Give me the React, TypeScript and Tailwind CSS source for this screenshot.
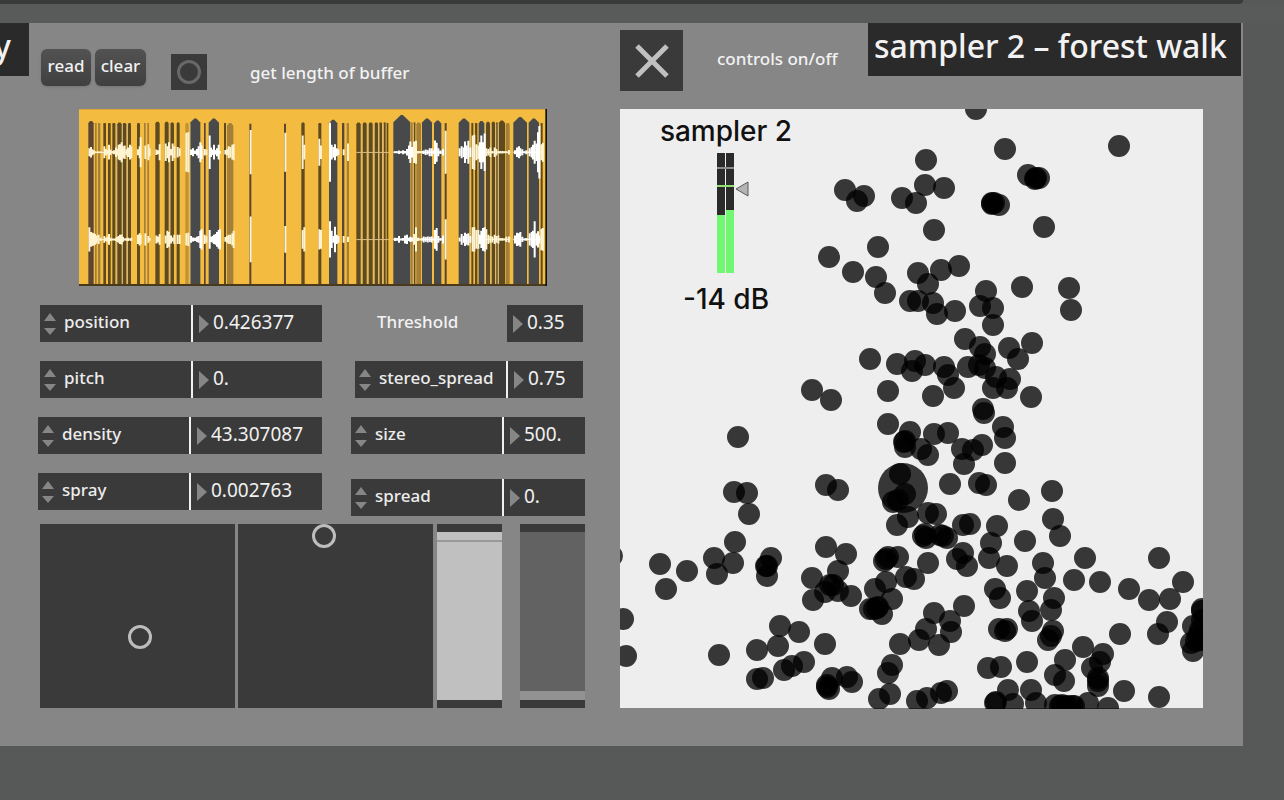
import { useState } from "react";

const DOTS: [number, number][] = [
  [976, 109], [1005, 149], [1119, 146], [926, 160], [925, 185], [944, 188], [1028, 175], [1035, 179], [1039, 178], [1036, 178],
  [845, 190], [864, 196], [857, 201], [902, 198], [916, 203], [992, 204], [999, 205], [994, 203], [992, 203], [1044, 227],
  [934, 230], [878, 247], [829, 257], [853, 272], [876, 277], [885, 293], [918, 273], [941, 270], [959, 266], [928, 284],
  [910, 301], [918, 301], [933, 303], [937, 314], [955, 311], [986, 291], [980, 306], [993, 308], [993, 325], [1022, 287],
  [1069, 288], [1071, 310], [965, 339], [980, 347], [985, 354], [1009, 348], [1032, 343], [1018, 359], [870, 359], [897, 364],
  [915, 361], [912, 371], [925, 365], [944, 367], [948, 375], [954, 388], [968, 367], [979, 365], [985, 368], [996, 377],
  [1010, 379], [993, 388], [1007, 388], [812, 390], [831, 400], [888, 391], [933, 396], [1031, 397],
  [983, 409], [984, 413], [1003, 427], [1005, 438], [888, 424], [910, 432], [905, 441], [905, 447], [904, 442], [934, 434],
  [948, 433], [921, 449], [928, 455], [962, 449], [982, 445], [973, 450], [964, 464], [1005, 463], [826, 485], [838, 490],
  [900, 474], [905, 494], [893, 502], [898, 500], [908, 517], [897, 525], [950, 484], [979, 483], [986, 485], [928, 513],
  [936, 514], [1019, 500], [1052, 491], [1053, 519], [1060, 536], [963, 525], [970, 524], [997, 526], [923, 536], [925, 534],
  [926, 538], [943, 536], [947, 538], [940, 535], [991, 543], [989, 558], [1007, 566], [1025, 541], [963, 553], [957, 559],
  [967, 566], [928, 563], [826, 547], [846, 554], [838, 571], [812, 578], [813, 600], [825, 592], [830, 585], [833, 585],
  [838, 591], [851, 596], [884, 561], [888, 557], [886, 559], [898, 557], [886, 582], [906, 577], [914, 579], [875, 589], [892, 599],
  [870, 609], [877, 608], [882, 614], [878, 607], [874, 609], [995, 589], [1000, 598], [1027, 591], [1043, 563], [1045, 578],
  [1085, 558], [1074, 580], [1100, 582], [1054, 598], [1051, 610], [1029, 611], [1032, 621], [964, 606], [934, 613], [950, 621],
  [951, 632], [926, 629], [919, 640], [939, 645], [900, 644], [999, 629], [1007, 629], [1005, 631], [1053, 631], [1048, 640],
  [1051, 636], [1159, 558], [1183, 582], [1129, 589], [1149, 600], [1170, 599], [1167, 622], [1158, 634], [1120, 634],
  [1202, 609], [1202, 611], [1193, 626], [1191, 643], [1193, 651], [1202, 640], [1202, 620], [1200, 630], [1198, 636], [1196, 641],
  [1083, 647], [1103, 654], [1092, 668], [1100, 662], [1098, 678], [1098, 686], [1098, 681], [1124, 691], [1159, 697],
  [1065, 660], [1055, 675], [1064, 681], [1027, 662], [988, 668], [1001, 667], [1008, 690], [1031, 690], [995, 703], [996, 702],
  [1013, 704], [1036, 703], [1055, 705], [1062, 705], [1072, 706], [1067, 706], [1060, 706], [1074, 706], [1088, 703], [1108, 708],
  [917, 701], [927, 698], [941, 693], [947, 691], [735, 542], [660, 564], [687, 571], [666, 589], [714, 558], [717, 574],
  [733, 563], [771, 558], [767, 566], [767, 576], [766, 566], [623, 619], [626, 656], [612, 556], [719, 655], [780, 626], [799, 632],
  [778, 646], [757, 650], [825, 644], [804, 662], [784, 670], [792, 666], [757, 679], [763, 678], [832, 678],
  [827, 685], [829, 689], [827, 687], [847, 677], [852, 682], [892, 665], [888, 673], [890, 694], [879, 699],
  [738, 437], [734, 492], [747, 493], [749, 514],
];

const GREY = "#48494b";
const OLIVE = "#5e4a1e";
const BROWN = "#5c4633";
const TAN = "#a37f38";

/* [left, right, top, fill] of each slice, with the tip of a slice rising above its shoulders */
const SLICES: [number, number, number, string][] = [
  [28, 44, 36, BROWN], [48, 53, 42, TAN], [57, 64, 42, TAN], [73, 81, 42, OLIVE], [87, 95, 42, OLIVE], [100, 109, 42, OLIVE],
  [115, 128, 40, OLIVE], [131, 142, 42, OLIVE], [147, 156, 42, OLIVE], [174, 183, 42, OLIVE], [195, 200, 42, TAN], [205, 210, 42, TAN],
  [229, 242, 38, OLIVE], [257, 269, 38, OLIVE], [274, 285, 40, OLIVE], [293, 302, 40, OLIVE], [319, 329, 42, "#c4922f"],
  [334, 364, 28, GREY], [375, 380, 42, BROWN], [389, 420, 28, GREY], [435, 441, 42, OLIVE], [444, 463, 42, TAN],
  [511, 517, 44, BROWN], [615, 621, 44, BROWN], [667, 677, 40, OLIVE], [718, 727, 42, OLIVE], [750, 775, 32, GREY],
  [789, 796, 42, BROWN], [803, 810, 42, TAN], [832, 845, 40, OLIVE], [851, 863, 40, OLIVE], [869, 881, 40, OLIVE],
  [887, 897, 40, OLIVE], [901, 909, 40, OLIVE], [914, 920, 40, OLIVE], [923, 928, 42, OLIVE], [943, 994, 18, GREY],
  [996, 1001, 40, TAN], [1004, 1009, 40, OLIVE], [1012, 1026, 40, TAN], [1029, 1059, 28, GREY], [1065, 1087, 34, GREY],
  [1097, 1103, 42, BROWN], [1139, 1171, 28, GREY], [1177, 1183, 42, OLIVE], [1188, 1195, 42, OLIVE], [1199, 1216, 36, GREY],
  [1221, 1233, 38, OLIVE], [1238, 1248, 38, OLIVE], [1251, 1256, 40, OLIVE], [1259, 1278, 34, OLIVE], [1280, 1292, 42, TAN],
  [1303, 1344, 24, GREY], [1349, 1380, 28, GREY], [1385, 1391, 42, OLIVE],
];

/* pale seams between close slices */
const SEAMS = [111, 129, 144, 271, 331, 847, 865, 883, 898, 911, 1002, 1218, 1234, 1249, 1257];

/* [x, reach in the upper channel, reach in the lower channel] */
const PEAKS: [number, number, number][] = [
  [28, 12, 36], [33, 16, 22], [37, 9, 20], [41, 6, 18], [45, 3, 16], [50, 2, 12], [56, 3, 14], [62, 2, 5], [73, 18, 10], [78, 10, 5],
  [83, 7, 8], [87, 22, 16], [91, 8, 5], [96, 4, 3], [102, 6, 3], [108, 14, 5], [112, 10, 8], [116, 22, 10], [120, 24, 14], [125, 30, 15],
  [129, 18, 7], [134, 20, 3], [139, 9, 4], [144, 14, 5], [150, 22, 3], [154, 17, 5], [174, 9, 14], [179, 18, 18], [182, 45, 14],
  [196, 20, 18], [205, 24, 10], [209, 12, 4], [229, 8, 12], [234, 6, 9], [239, 24, 16], [257, 26, 12], [262, 18, 26], [267, 30, 22],
  [273, 10, 12], [278, 26, 6], [283, 18, 14], [293, 16, 14], [299, 12, 14], [319, 58, 18], [325, 60, 20], [333, 8, 10], [339, 12, 6],
  [345, 5, 5], [351, 10, 8], [356, 18, 10], [361, 30, 26], [365, 20, 30], [374, 10, 14], [379, 8, 10], [389, 50, 28], [393, 14, 8],
  [398, 8, 10], [402, 22, 14], [407, 7, 16], [411, 12, 22], [416, 22, 28], [420, 4, 30], [436, 7, 7], [441, 9, 10], [446, 18, 14],
  [451, 16, 14], [457, 22, 18], [461, 24, 26], [512, 66, 68], [616, 58, 40], [668, 50, 28], [673, 22, 36],
  [718, 40, 30], [723, 20, 28], [750, 88, 54], [755, 22, 26], [760, 16, 10], [765, 24, 38], [770, 12, 14], [775, 8, 10], [791, 9, 10],
  [804, 26, 8], [945, 3, 5], [951, 3, 4], [957, 5, 10], [963, 3, 3], [969, 6, 4], [975, 4, 12], [981, 10, 14],
  [987, 20, 5], [991, 32, 8], [996, 16, 6], [1002, 32, 16], [1008, 34, 36], [1014, 4, 5], [1020, 3, 3], [1026, 4, 4], [1031, 5, 9],
  [1037, 8, 7], [1043, 7, 9], [1049, 12, 8], [1055, 12, 9], [1061, 5, 3], [1065, 35, 28], [1070, 28, 34], [1075, 12, 10], [1081, 5, 4],
  [1089, 10, 12], [1097, 64, 60], [1139, 12, 6], [1145, 18, 16], [1151, 14, 10], [1155, 32, 20], [1160, 20, 16], [1165, 34, 18],
  [1171, 14, 10], [1178, 50, 36], [1183, 52, 36], [1189, 24, 28], [1195, 20, 28], [1200, 30, 14], [1204, 50, 26], [1209, 30, 34],
  [1214, 56, 36], [1219, 12, 30], [1225, 10, 14], [1231, 14, 10], [1237, 4, 9], [1244, 14, 14], [1249, 10, 10], [1255, 4, 12],
  [1261, 4, 4], [1267, 4, 4], [1273, 3, 3], [1279, 3, 8], [1287, 7, 9], [1305, 6, 12], [1311, 14, 20], [1317, 18, 18], [1321, 12, 22],
  [1327, 9, 8], [1333, 3, 3], [1339, 6, 4], [1349, 12, 18], [1355, 16, 22], [1359, 22, 26], [1364, 34, 54], [1369, 26, 18],
  [1374, 60, 24], [1378, 78, 12], [1384, 24, 32], [1389, 28, 34],
];

/* peaks over the grey slices are pure white, those over the narrow slices are warm */
function peakTint(x: number) {
  return SLICES.some(([l, r, , fill]) => fill === GREY && x >= l - 2 && x <= r + 2) ? "#ffffff" : "#fff4cf";
}

function Waveform() {
  return (
    <svg viewBox="0 0 1404 528" preserveAspectRatio="none" role="img" aria-label="Buffer waveform" className="block h-[177px] w-full">
      <rect width="1404" height="528" fill="#f3bb3f" />
      <rect width="1404" height="3" fill="#d9a63a" />
      {SLICES.map(([l, r, t, fill]) => (
        <path key={l} fill={fill} d={`M${l} 524V${t + (r - l) / 2.4}L${(l + r) / 2 - 3} ${t}h6L${r} ${t + (r - l) / 2.4}V524Z`} />
      ))}
      {SEAMS.map((x) => (
        <rect key={x} x={x} y="44" width="3" height="480" fill="#cdb98c" opacity="0.8" />
      ))}
      <rect x="56" y="128" width="100" height="3" fill="#fff3d0" />
      <rect x="56" y="388" width="100" height="3" fill="#fff3d0" />
      <rect x="832" y="128" width="100" height="3" fill="#d8bd86" />
      <rect x="832" y="388" width="100" height="3" fill="#d8bd86" />
      <rect x="943" y="127" width="150" height="4" fill="#fff" />
      <rect x="943" y="387" width="150" height="4" fill="#fff" />
      <rect x="1199" y="127" width="95" height="4" fill="#fff3d0" />
      <rect x="1199" y="387" width="95" height="4" fill="#fff3d0" />
      <rect x="1303" y="127" width="90" height="4" fill="#fff" />
      <rect x="1303" y="387" width="90" height="4" fill="#fff" />
      {PEAKS.map(([x, a, b]) => (
        <path key={x} fill={peakTint(x)} d={`M${x} ${129 - a}h6v${a * 2}h-6ZM${x} ${389 - b}h6v${b * 2}h-6Z`} />
      ))}
      <rect y="522" width="1404" height="6" fill="#4a3a1c" />
      <rect x="1399" width="5" height="528" fill="#111" />
    </svg>
  );
}

function ValueBox({ id, value }: { id: string; value: string }) {
  const [text, setText] = useState(value);
  return (
    <span className="flex h-[37px] min-w-0 flex-1 items-center bg-[#3a3a3a] pl-1.5">
      <svg viewBox="0 0 10 18" className="h-[18px] w-[10px] shrink-0" aria-hidden="true">
        <path d="M0 0L10 9L0 18Z" fill="#868686" />
      </svg>
      <input
        id={id}
        value={text}
        onChange={(e) => setText(e.target.value)}
        className="ml-1 h-9 w-full min-w-0 bg-transparent pb-1 text-[19px] font-normal text-[#f0f0f0] outline-none"
      />
    </span>
  );
}

function Param({ name, value, className }: { name: string; value: string; className: string }) {
  return (
    <div className={`flex ${className}`}>
      <label htmlFor={name} className="flex h-[37px] w-[151px] shrink-0 items-center bg-[#3a3a3a] pl-1">
        <svg viewBox="0 0 12 22" className="h-[22px] w-3 shrink-0" aria-hidden="true">
          <path d="M0 8L6 0L12 8ZM0 15H12L6 22Z" fill="#868686" />
        </svg>
        <span className="pb-1 pl-2 text-[17px] leading-6 font-medium text-[#ececec]">{name}</span>
      </label>
      <span className="w-0.5 shrink-0 bg-[#f0f0f0]" />
      <ValueBox id={name} value={value} />
    </div>
  );
}

function Meter() {
  return (
    <svg viewBox="0 0 32 120" className="h-[120px] w-8" role="img" aria-label="Output level">
      <rect width="8" height="120" fill="#2a2b2a" />
      <rect x="9" width="8" height="120" fill="#2a2b2a" />
      <rect y="14" width="17" height="2" fill="#8b8b8b" />
      <rect y="32" width="17" height="2" fill="#8fe070" />
      <rect y="62" width="8" height="58" fill="#72f772" />
      <rect x="9" y="57" width="8" height="63" fill="#72f772" />
      <path d="M19 36L31 29V43Z" fill="#b4b4b4" stroke="#5a5a5a" />
    </svg>
  );
}

function Canvas() {
  return (
    <div className="relative">
      <svg viewBox="620 109 583 600" className="block w-full" role="img" aria-label="Grain map">
        <rect x="620" y="109" width="583" height="599" fill="#eeeeee" />
        <circle cx="903" cy="488" r="25" opacity="0.77" />
        {DOTS.map(([x, y], i) => (
          <circle key={i} cx={x} cy={y} r="11" opacity="0.77" />
        ))}
      </svg>
      <div className="absolute top-1 left-7 flex w-[156px] flex-col items-center font-['Inter',sans-serif] text-[28px] leading-9 font-medium text-[#111]">
        <span className="whitespace-nowrap">sampler 2</span>
        <div className="mt-1 pl-3.5">
          <Meter />
        </div>
        <span className="mt-2 whitespace-nowrap">-14 dB</span>
      </div>
    </div>
  );
}

function Pad({ label, dot }: { label: string; dot: string }) {
  return (
    <div role="group" aria-label={label} className="relative h-[184px] flex-1 bg-[#3a3a3a]">
      <span className={`absolute size-6 rounded-full border-[3px] border-[#bdbdbd] ${dot}`} />
    </div>
  );
}

export default function App() {
  const [on, setOn] = useState(true);
  return (
    <div className="min-h-screen overflow-x-hidden bg-[#575958] font-['Noto_Sans',sans-serif] font-medium text-[#f2f2f2]">
      <div className="mr-[41px] h-1 rounded-br bg-[#3a3a3a]" />
      <div className="h-[19px] bg-[#595b5a]" />
      <main className="mr-[41px] flex bg-[#868686] pb-[37px]">
        <section className="w-[585px] shrink-0">
          <div className="flex h-[86px] items-start">
            <div className="flex h-[53px] w-[29px] shrink-0 justify-end overflow-hidden bg-[#2a2a2a] pr-[18px] text-[32px] leading-[46px]">y</div>
            <button className="mt-[26px] ml-3 h-[37px] w-[50px] rounded-md bg-linear-to-b from-[#525252] to-[#404040] pb-1 text-[17px] shadow-sm">read</button>
            <button className="mt-[26px] ml-1 h-[37px] w-[51px] rounded-md bg-linear-to-b from-[#525252] to-[#404040] pb-1 text-[17px] shadow-sm">clear</button>
            <button aria-label="get length" className="mt-[31px] ml-[25px] flex size-9 items-center justify-center bg-[#3a3a3a]">
              <span className="size-6 rounded-full border-[3px] border-[#686868]" />
            </button>
            <span className="mt-[38px] ml-[43px] text-[17px] leading-6">get length of buffer</span>
          </div>
          <div className="mr-[38px] ml-[79px]">
            <Waveform />
          </div>
          <div className="mt-[19px] flex justify-between">
            <div className="flex w-[322px] flex-col gap-[19px]">
              <Param name="position" value="0.426377" className="ml-10" />
              <Param name="pitch" value="0." className="ml-10" />
              <Param name="density" value="43.307087" className="ml-[38px]" />
              <Param name="spray" value="0.002763" className="ml-[38px]" />
            </div>
            <div className="flex w-[234px] flex-col gap-[19px]">
              <div className="mr-0.5 flex items-center">
                <label htmlFor="threshold" className="w-[156px] pb-1 pl-[26px] text-[17px] leading-6">Threshold</label>
                <ValueBox id="threshold" value="0.35" />
              </div>
              <Param name="stereo_spread" value="0.75" className="mr-0.5 ml-1" />
              <Param name="size" value="500." className="" />
              <Param name="spread" value="0." className="mt-1.5" />
            </div>
          </div>
          <div className="mt-2 flex pl-10">
            <Pad label="Position and pitch" dot="top-[101px] left-[88px]" />
            <span className="w-[3px]" />
            <Pad label="Density and spray" dot="top-0 left-[74px]" />
            <div className="ml-1 flex h-[184px] w-[65px] flex-col border-y-8 border-[#3a3a3a] bg-[#c0c0c0]">
              <span className="mt-2 h-0.5 bg-[#999999]" />
            </div>
            <div className="ml-[18px] flex h-[184px] w-[65px] flex-col justify-end border-y-8 border-[#3a3a3a] bg-[#626262]">
              <span className="h-[9px] bg-[#929292]" />
            </div>
          </div>
        </section>
        <section className="ml-[35px] min-w-0 flex-1">
          <div className="flex h-[86px] items-start pr-0.5">
            <button aria-label="controls on/off" aria-pressed={on} onClick={() => setOn(!on)} className="mt-[7px] flex h-[61px] w-[63px] shrink-0 items-center justify-center bg-[#3a3a3a]">
              {on && (
                <svg viewBox="0 0 34 34" className="size-[34px]" aria-hidden="true">
                  <path d="M2 2L32 32M32 2L2 32" stroke="#c0c0c0" strokeWidth="5" />
                </svg>
              )}
            </button>
            <span className="mt-6 ml-[34px] text-[17px] leading-6 whitespace-nowrap">controls on/off</span>
            <h1 className="ml-auto h-[53px] w-[373px] shrink-0 bg-[#2a2a2a] pl-1.5 text-[32px] leading-[46px] font-medium whitespace-nowrap">sampler 2 – forest walk</h1>
          </div>
          <div className="mr-10">
            <Canvas />
          </div>
        </section>
      </main>
    </div>
  );
}
